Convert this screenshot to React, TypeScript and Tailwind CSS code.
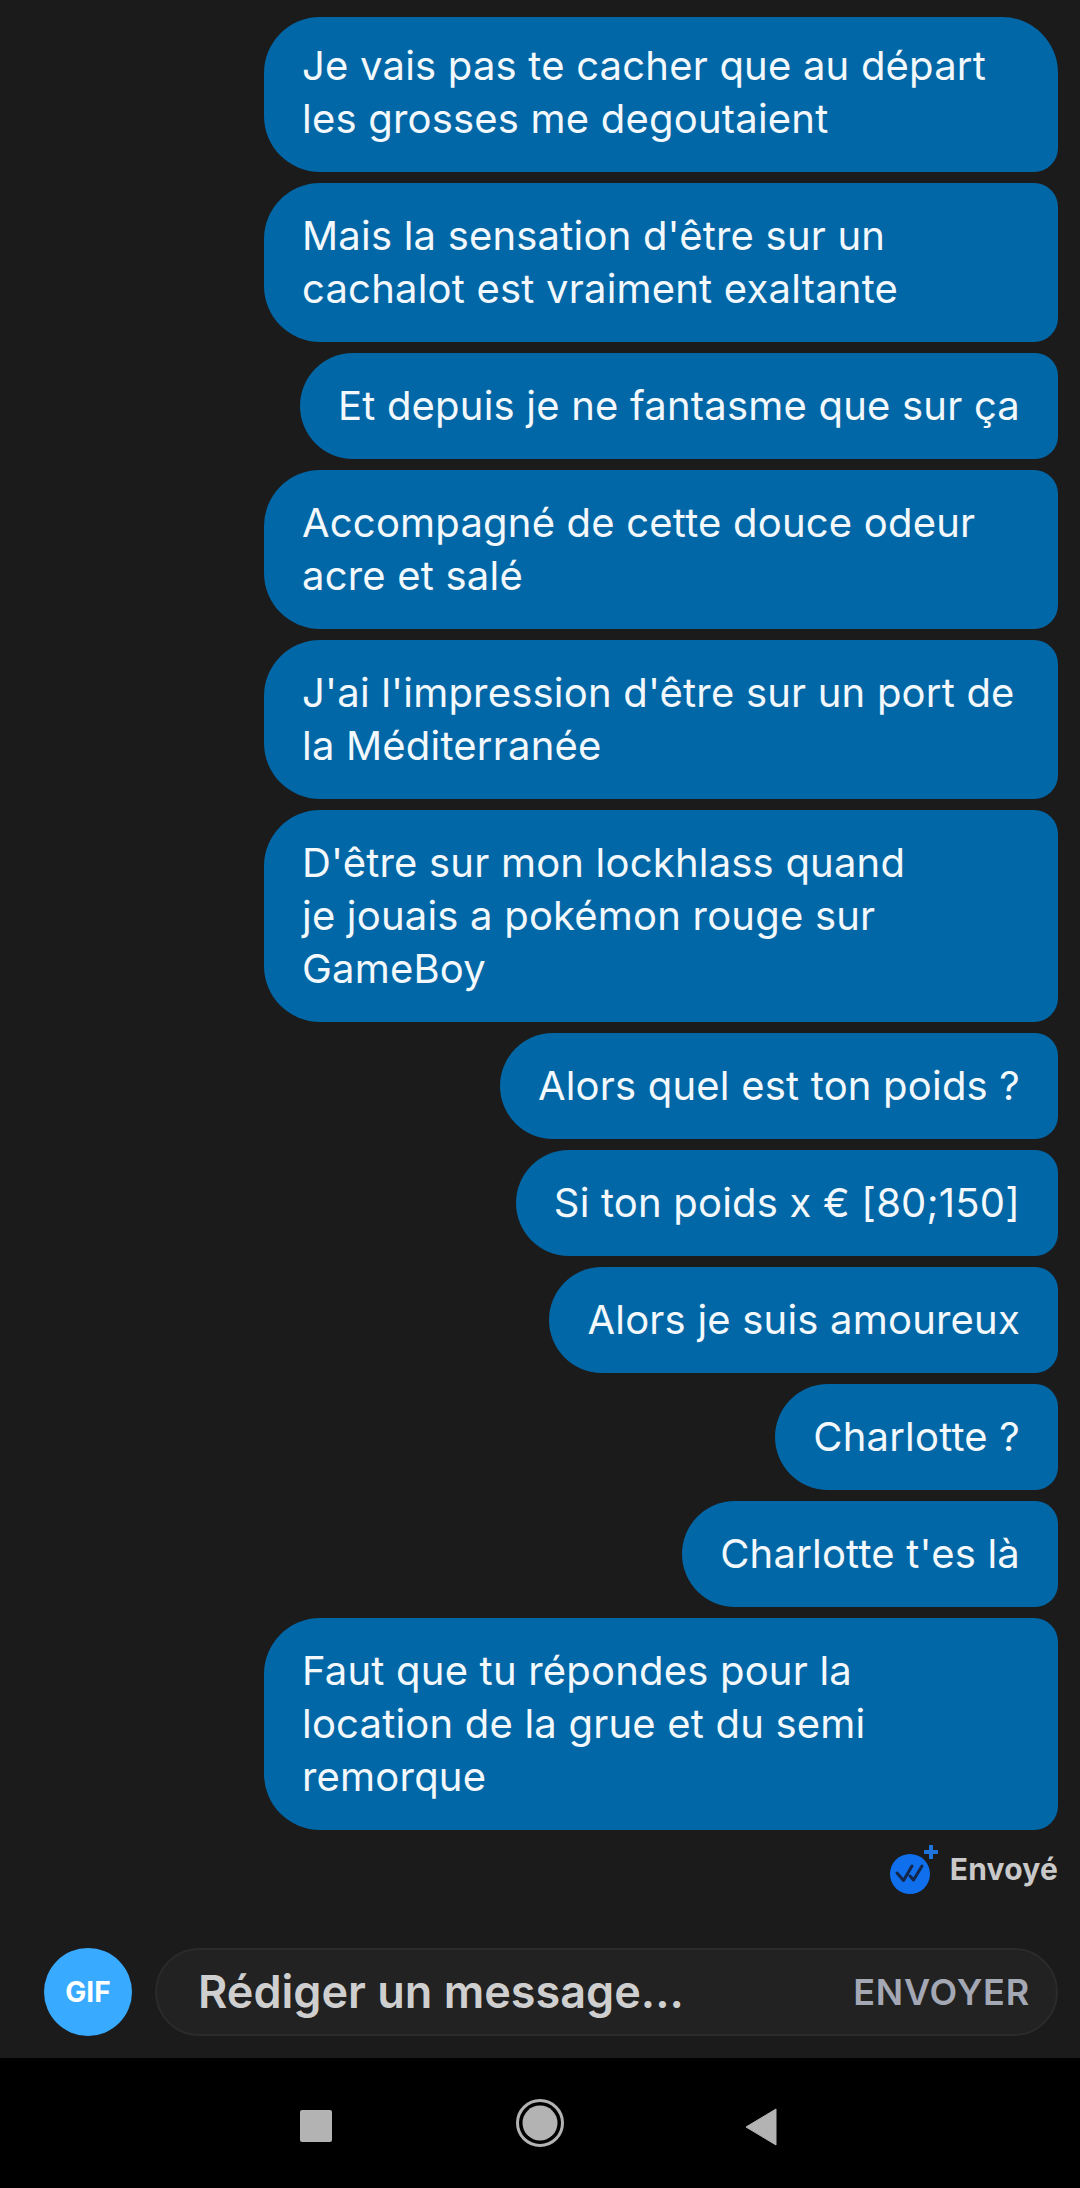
const FONT = "font-['Inter','Noto_Sans',sans-serif]";

interface Message {
  lines: string[];
  wide?: boolean;
}

const MESSAGES: Message[] = [
  { lines: ["Je vais pas te cacher que au départ", "les grosses me degoutaient"], wide: true },
  { lines: ["Mais la sensation d'être sur un", "cachalot est vraiment exaltante"], wide: true },
  { lines: ["Et depuis je ne fantasme que sur ça"] },
  { lines: ["Accompagné de cette douce odeur", "acre et salé"], wide: true },
  { lines: ["J'ai l'impression d'être sur un port de", "la Méditerranée"], wide: true },
  { lines: ["D'être sur mon lockhlass quand", "je jouais a pokémon rouge sur", "GameBoy"], wide: true },
  { lines: ["Alors quel est ton poids ?"] },
  { lines: ["Si ton poids x € [80;150]"] },
  { lines: ["Alors je suis amoureux"] },
  { lines: ["Charlotte ?"] },
  { lines: ["Charlotte t'es là"] },
  { lines: ["Faut que tu répondes pour la", "location de la grue et du semi", "remorque"], wide: true },
];

function Bubble({ msg, first }: { msg: Message; first: boolean }) {
  return (
    <div
      className={`bg-[#0267a6] text-[#f2f8fb] text-[40px] leading-[53px] tracking-[0.2px] whitespace-nowrap pl-[38px] pr-[38px] pb-[27px] rounded-l-[56px] rounded-br-[24px] ${
        first ? "pt-[22px] rounded-tr-[56px]" : "pt-[26px] rounded-tr-[24px]"
      } ${msg.wide ? "w-[794px]" : ""}`}
    >
      {msg.lines.map((line) => (
        <div key={line}>{line}</div>
      ))}
    </div>
  );
}

function SentIcon() {
  return (
    <svg width="48" height="49" viewBox="0 0 48 49" className="shrink-0">
      <circle cx="20" cy="29" r="20" fill="#0f6fec" />
      <path d="M7 28l6.500 7.500L22 21M20 31l3.500 4L32 21" fill="none" stroke="#14264a" strokeWidth="3" strokeLinecap="round" strokeLinejoin="round" />
      <path d="M41 0v14M34 7h14" stroke="#1f74dc" strokeWidth="4" />
    </svg>
  );
}

export default function App() {
  return (
    <div className={`${FONT} w-[1080px] h-[2188px] bg-[#1b1b1b] flex flex-col overflow-hidden`}>
      <div className="flex flex-col items-end gap-[11px] pt-[17px] pr-[22px]">
        {MESSAGES.map((msg, i) => (
          <Bubble key={i} msg={msg} first={i === 0} />
        ))}
      </div>

      <div className="flex items-center justify-end gap-[12px] pr-[22px] mt-[15px] h-[49px]">
        <SentIcon />
        <span className="text-[#c9c9c9] text-[30px] font-bold tracking-[0.2px]">Envoyé</span>
      </div>

      <div className="flex items-center gap-[23px] pl-[44px] pr-[22px] mt-[54px]">
        <div className="w-[88px] h-[88px] rounded-full bg-[#38aaff] flex items-center justify-center text-white text-[28px] font-bold shrink-0">
          GIF
        </div>
        <div className="flex-1 h-[88px] rounded-full bg-[#222222] border-[2px] border-[#2b2b2b] flex items-center justify-between pl-[41px] pr-[26px]">
          <span className="text-[#cfcfcf] text-[45px] font-semibold">Rédiger un message...</span>
          <span className="text-[#a3a8b4] text-[36px] font-semibold tracking-[0.8px]">ENVOYER</span>
        </div>
      </div>

      <div className="mt-[22px] flex-1 bg-black relative">
        <div className="absolute left-[300px] top-[52px] w-[32px] h-[32px] rounded-[2px] bg-[#b3b3b3]" />
        <svg width="48" height="48" viewBox="0 0 48 48" className="absolute left-[516px] top-[41px]">
          <circle cx="24" cy="24" r="22.500" fill="none" stroke="#b3b3b3" strokeWidth="3" />
          <circle cx="24" cy="24" r="17.500" fill="#b3b3b3" />
        </svg>
        <svg width="32" height="38" viewBox="0 0 32 38" className="absolute left-[745px] top-[50px]">
          <path d="M31 1v36L1 19z" fill="#b3b3b3" stroke="#b3b3b3" strokeLinejoin="round" />
        </svg>
      </div>
    </div>
  );
}
